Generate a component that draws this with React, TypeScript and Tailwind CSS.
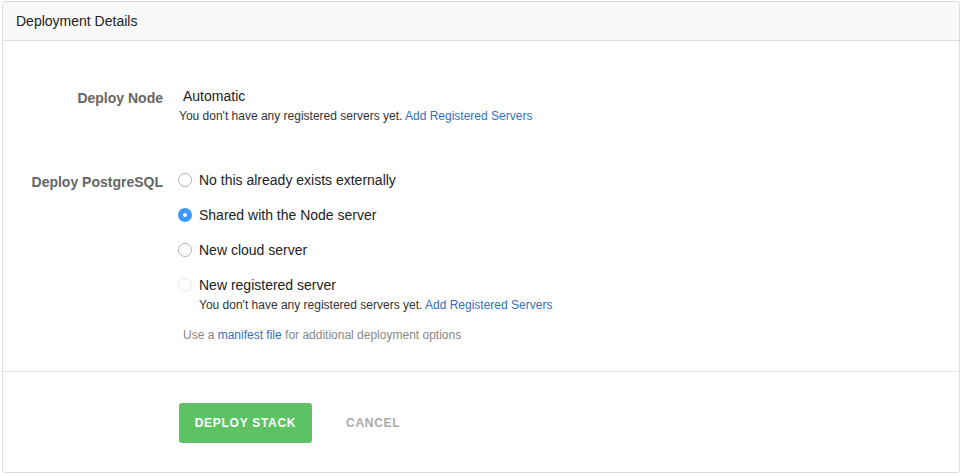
const font = { fontFamily: '"Liberation Sans", Arial, sans-serif' };

function Radio({ checked, disabled }: { checked?: boolean; disabled?: boolean }) {
  if (checked) {
    return (
      <span className="flex h-[14px] w-[14px] shrink-0 items-center justify-center rounded-full bg-[#3b99fc]">
        <span className="h-[4px] w-[4px] rounded-full bg-white" />
      </span>
    );
  }
  return (
    <span
      className={`h-[14px] w-[14px] shrink-0 rounded-full border bg-white ${
        disabled ? "border-[#e8e8e8]" : "border-[#b3b3b3]"
      }`}
    />
  );
}

const options = [
  { label: "No this already exists externally" },
  { label: "Shared with the Node server", checked: true },
  { label: "New cloud server" },
  { label: "New registered server", disabled: true, note: true },
];

export default function App() {
  return (
    <div className="h-[476px] w-[961px] bg-white pl-[2px] pr-[1px] pt-[1px]" style={font}>
      <div className="overflow-hidden rounded-[3px] border border-[#dcdcdc] bg-white">
        {/* header */}
        <div className="flex h-[39px] items-center border-b border-[#dcdcdc] bg-[#f9f9f9] px-[13px] text-[14px] text-[#222]">
          Deployment Details
        </div>

        {/* body */}
        <div className="pb-[28px] pt-[45px]">
          <div className="grid grid-cols-[160px_1fr] gap-x-4">
            <div className="pt-[2px] text-right text-[14px] font-bold leading-5 text-[#666]">Deploy Node</div>
            <div>
              <div className="pl-1 text-[14px] leading-5 text-[#222]">Automatic</div>
              <div className="mt-[2px] text-[12px] leading-4 text-[#333]">
                You don't have any registered servers yet.{" "}
                <a className="text-[#3370c4]">Add Registered Servers</a>
              </div>
            </div>
          </div>

          <div className="mt-[46px] grid grid-cols-[160px_1fr] gap-x-4">
            <div className="pt-[2px] text-right text-[14px] font-bold leading-5 text-[#666]">Deploy PostgreSQL</div>
            <div className="-ml-px">
              <div className="flex flex-col gap-[15px]">
                {options.map((o) => (
                  <div key={o.label}>
                    <label className="flex h-5 items-center gap-[7px] text-[14px] text-[#222]">
                      <Radio checked={o.checked} disabled={o.disabled} />
                      {o.label}
                    </label>
                    {o.note && (
                      <div className="mt-[2px] pl-[21px] text-[12px] leading-4 text-[#333]">
                        You don't have any registered servers yet.{" "}
                        <a className="text-[#3370c4]">Add Registered Servers</a>
                      </div>
                    )}
                  </div>
                ))}
              </div>
              <div className="mt-[14px] pl-[5px] text-[12px] leading-4 text-[#888]">
                Use a <a className="text-[#3370c4]">manifest file</a> for additional deployment options
              </div>
            </div>
          </div>
        </div>

        {/* footer */}
        <div className="flex items-center gap-[34px] border-t border-[#e6e6e6] pb-[29px] pl-[176px] pt-[31px]">
          <button className="h-10 w-[133px] rounded-[3px] bg-[#5cc264] text-[12px] font-bold tracking-[0.06em] text-white">
            DEPLOY STACK
          </button>
          <button className="text-[12px] font-bold tracking-[0.06em] text-[#aaa]">CANCEL</button>
        </div>
      </div>
    </div>
  );
}
